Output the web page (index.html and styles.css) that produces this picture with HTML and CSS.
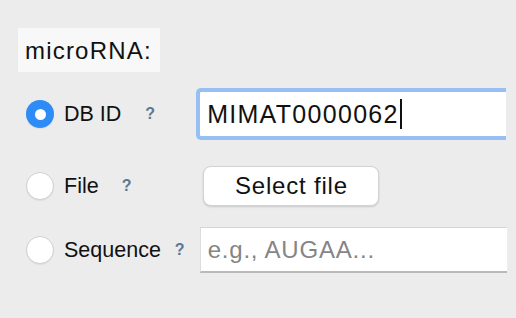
FILE: index.html
```html
<!DOCTYPE html>
<html lang="en">
<head>
    <meta charset="UTF-8">
    <meta name="viewport" content="width=device-width, initial-scale=1.0">
    <title>microRNA input</title>
    <link rel="stylesheet" href="styles.css">
</head>
<body>
    <div class="panel">
        <div class="title">microRNA:</div>

        <div class="row row-dbid">
            <label class="choice">
                <span class="radio checked"></span>
                <span class="choice-text">DB ID</span>
            </label>
            <span class="help help-dbid">?</span>
            <div class="field focused">
                <span class="field-value">MIMAT0000062</span><span class="caret"></span>
            </div>
        </div>

        <div class="row row-file">
            <label class="choice">
                <span class="radio"></span>
                <span class="choice-text">File</span>
            </label>
            <span class="help help-file">?</span>
            <button class="file-button">Select file</button>
        </div>

        <div class="row row-seq">
            <label class="choice">
                <span class="radio"></span>
                <span class="choice-text">Sequence</span>
            </label>
            <span class="help help-seq">?</span>
            <div class="field plain">
                <span class="placeholder">e.g., AUGAA...</span>
            </div>
        </div>
    </div>
</body>
</html>
```

FILE: styles.css
```css
body {
    margin: 0;
    background-color: #ececec;
    font-family: "Liberation Sans", Arial, sans-serif;
    color: #111;
    width: 516px;
    height: 318px;
    overflow: hidden;
}
.panel {
    padding: 28px 0 0 18px;
}
.title {
    display: inline-block;
    box-sizing: border-box;
    width: 142px;
    height: 44px;
    line-height: 46px;
    padding-left: 7px;
    background-color: #f8f8f8;
    font-size: 24px;
    letter-spacing: 1.2px;
}
.row {
    display: flex;
    align-items: center;
}
.row-dbid {
    margin-top: 16px;
    height: 52px;
}
.row-file {
    margin-top: 26px;
    height: 40px;
}
.row-seq {
    margin-top: 21px;
    height: 46px;
}
.choice {
    display: flex;
    align-items: center;
    margin-left: 8px;
}
.radio {
    box-sizing: border-box;
    width: 28px;
    height: 28px;
    border-radius: 50%;
    background-color: #fff;
    border: 1px solid #cfcfcf;
    box-shadow: 0 1px 1px rgba(0,0,0,0.06);
}
.radio.checked {
    border: none;
    background-color: #2e8cf6;
    display: flex;
    align-items: center;
    justify-content: center;
}
.radio.checked::after {
    content: "";
    width: 11px;
    height: 11px;
    border-radius: 50%;
    background-color: #fff;
}
.choice-text {
    margin-left: 10px;
    font-size: 21.5px;
}
.help {
    font-size: 16px;
    font-weight: bold;
    color: #5b7896;
}
.help-dbid {
    margin-left: 24px;
}
.help-file {
    margin-left: 23px;
}
.help-seq {
    margin-left: 14px;
}
.field {
    box-sizing: border-box;
    background-color: #fff;
    display: flex;
    align-items: center;
}
.field.focused {
    margin-left: 41px;
    width: 310px;
    height: 52px;
    border: 4px solid #95c0f1;
    border-right: none;
    border-radius: 5px 0 0 5px;
    padding-left: 7px;
    font-size: 25px;
}
.field-value {
    letter-spacing: 1.3px;
}
.caret {
    display: inline-block;
    width: 2px;
    height: 30px;
    background-color: #111;
    margin-left: 1px;
}
.field.plain {
    margin-left: 15px;
    width: 307px;
    height: 46px;
    border-top: 1px solid #d6d6d6;
    border-left: 1px solid #dcdcdc;
    border-bottom: 2px solid #b9b9b9;
    padding-left: 7px;
}
.placeholder {
    color: #858585;
    font-size: 24px;
    letter-spacing: 0.8px;
}
.file-button {
    margin-left: 72px;
    width: 176px;
    height: 40px;
    background-color: #fff;
    border: 1px solid #d3d3d3;
    border-radius: 8px;
    box-shadow: 0 1px 2px rgba(0,0,0,0.15);
    font-family: "Liberation Sans", Arial, sans-serif;
    font-size: 24px;
    letter-spacing: 0.8px;
    color: #111;
    padding: 0;
}
```
